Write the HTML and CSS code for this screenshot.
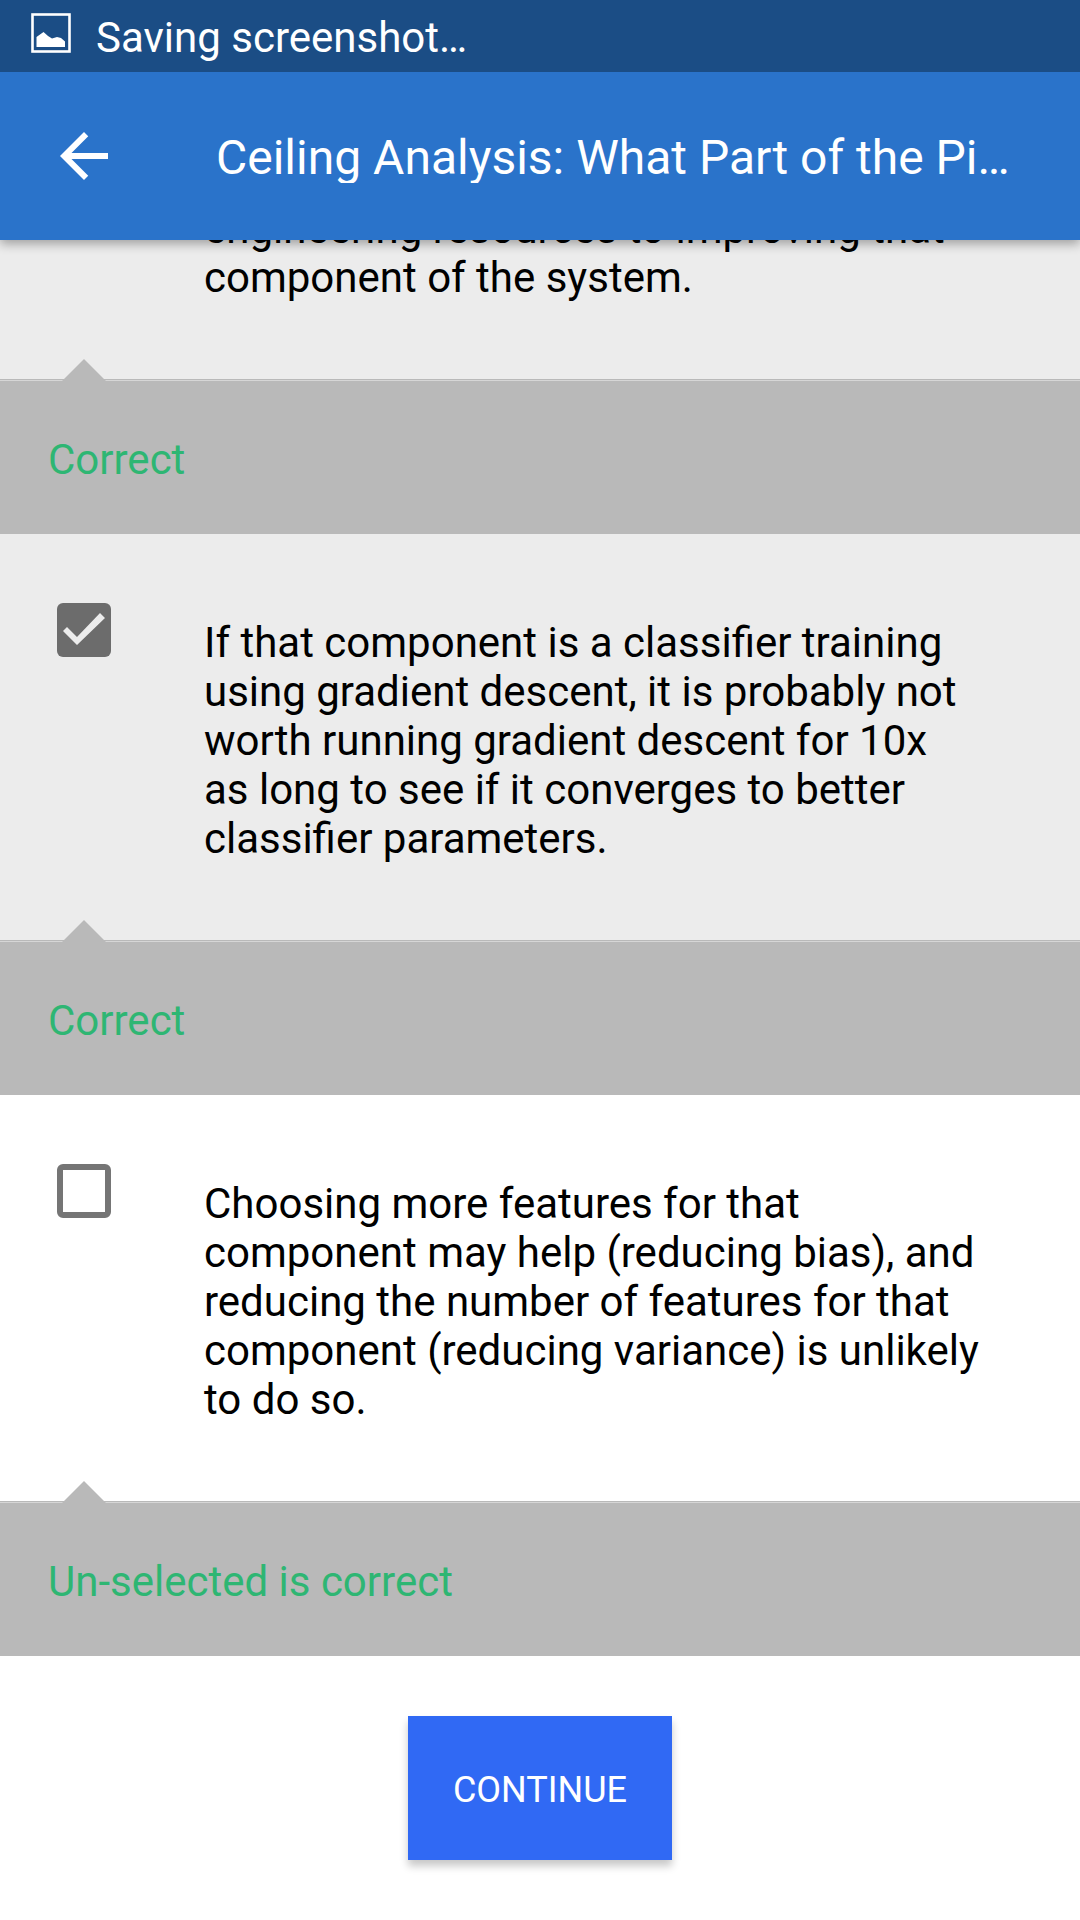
FILE: index.html
```html
<!DOCTYPE html>
<html lang="en">
<head>
<meta charset="utf-8">
<meta name="viewport" content="width=device-width, initial-scale=1">
<title>Ceiling Analysis</title>
<link rel="stylesheet" href="styles.css">
</head>
<body>
<div class="status-bar">
  <svg class="status-icon" viewBox="0 0 40 40" aria-hidden="true">
    <rect x="1.500" y="1.500" width="37" height="37" fill="none" stroke="#fff" stroke-width="2.600"/>
    <path d="M5.500 34V24L12.500 19L17 23L21 25.500L26 24L30 25L34 28.500V34Z" fill="#fff"/>
  </svg>
  <span class="status-text">Saving screenshot…</span>
</div>
<header class="app-bar">
  <button class="back" type="button" aria-label="Back">
    <svg class="back-icon" viewBox="4 4 16 16" aria-hidden="true">
      <path d="M20 11H7.830l5.590-5.590L12 4l-8 8 8 8 1.410-1.410L7.830 13H20v-2z" fill="#fff"/>
    </svg>
  </button>
  <h1 class="title">Ceiling Analysis: What Part of the Pi…</h1>
</header>
<main class="quiz">
  <section class="option selected continued">
    <p class="answer">engineering resources to improving that component of the system.</p>
  </section>
  <p class="feedback">Correct</p>
  <section class="option selected">
    <input class="tick" type="checkbox" id="gradient" checked>
    <label class="answer" for="gradient">If that component is a classifier training using gradient descent, it is probably not worth running gradient descent for 10x<br>as long to see if it converges to better classifier parameters.</label>
  </section>
  <p class="feedback">Correct</p>
  <section class="option">
    <input class="tick" type="checkbox" id="features">
    <label class="answer" for="features">Choosing more features for that component may help (reducing bias), and reducing the number of features for that component (reducing variance) is unlikely to do so.</label>
  </section>
  <p class="feedback">Un-selected is correct</p>
  <div class="actions">
    <button class="continue" type="button">CONTINUE</button>
  </div>
</main>
</body>
</html>
```
FILE: styles.css
```css
* {
  box-sizing: border-box;
}

body {
  margin: 0;
  background: #fff;
  color: #000;
  font-family: Roboto, sans-serif;
  font-size: 42px;
  line-height: 49px;
}

.status-bar {
  position: relative;
  z-index: 2;
  display: flex;
  align-items: center;
  gap: 25px;
  height: 72px;
  padding: 0 31px;
  background: #1b4d85;
  color: #fff;
}

.status-icon {
  width: 40px;
  height: 40px;
  margin-bottom: 6px;
}

.status-text {
  padding-top: 2px;
}

.app-bar {
  position: relative;
  z-index: 1;
  display: flex;
  align-items: center;
  gap: 60px;
  height: 168px;
  padding: 0 60px 0 12px;
  background: #2a73ca;
  color: #fff;
  box-shadow: 0 4px 10px rgba(0, 0, 0, 0.32);
}

.back {
  display: grid;
  flex: none;
  place-items: center;
  width: 144px;
  height: 144px;
  padding: 0;
  border: 0;
  background: none;
}

.back-icon {
  width: 48px;
  height: 48px;
}

.title {
  margin: 0;
  padding-top: 3px;
  overflow: hidden;
  font-size: 48px;
  font-weight: 400;
  line-height: 50px;
  text-overflow: ellipsis;
  white-space: nowrap;
}

.option {
  display: grid;
  grid-template-columns: 54px 1fr;
  align-items: start;
  column-gap: 93px;
  padding: 69px 84px 77px 57px;
}

.selected {
  background: #ececec;
}

/* The first answer is scrolled partly under the app bar. */
.continued {
  margin-top: -36px;
  padding-top: 0;
}

.answer {
  grid-column: 2;
  margin: 0;
}

.tick + .answer {
  margin-top: 15px;
}

.tick {
  width: 54px;
  height: 54px;
  margin: 0;
  border: 6px solid #757575;
  border-radius: 6px;
  appearance: none;
}

.tick:checked {
  border: 0;
  background: #6c6c6c;
}

.tick:checked::before {
  content: "";
  display: block;
  height: 54px;
  background: #ececec;
  clip-path: polygon(6px 28px, 10px 24px, 20px 34px, 43px 10px, 48px 15px, 20px 42px);
}

.feedback {
  position: relative;
  margin: 0;
  padding: 55px 48px 50px;
  border-top: 1px solid #b9b9b9;
  background: #b9b9b9;
  box-shadow: inset 0 1px #d6d6d6;
  color: #2eb673;
}

/* Pointer towards the answer that the feedback belongs to. */
.feedback::before {
  content: "";
  position: absolute;
  top: -21px;
  left: 62px;
  width: 44px;
  height: 22px;
  background: #b9b9b9;
  clip-path: polygon(50% 0, 100% 100%, 0 100%);
}

.actions {
  display: flex;
  justify-content: center;
  padding: 60px;
}

.continue {
  min-width: 264px;
  height: 144px;
  padding: 4px 0 0;
  border: 0;
  background: #3069f4;
  box-shadow: 0 6px 8px rgba(0, 0, 0, 0.22);
  color: #fff;
  font: 400 36px/42px Roboto, sans-serif;
}
```
